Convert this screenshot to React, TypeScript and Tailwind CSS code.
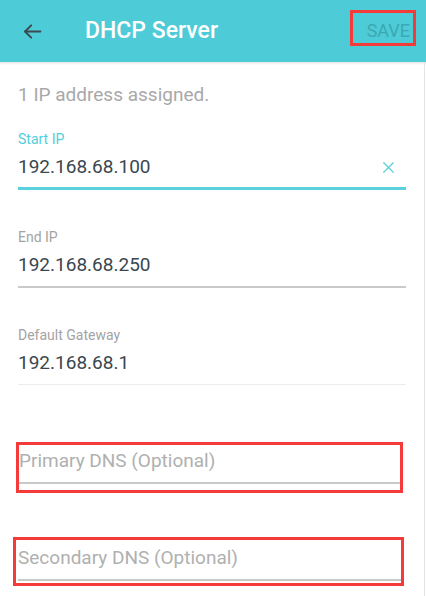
import { X } from 'lucide-react';

const font = { fontFamily: 'Roboto, "Noto Sans", sans-serif' };

function Field({ label, value, active, last }: { label: string; value: string; active?: boolean; last?: boolean }) {
  return (
    <div>
      <div className={`text-[14px] leading-[20px] ${active ? 'text-[#4fcfdc]' : 'text-[#a3a3a3]'}`}>{label}</div>
      <div className="flex items-center justify-between h-[36px]">
        <span className="text-[19px] text-[#3a474e]">{value}</span>
        {active && <X className="w-[19px] h-[19px] mr-[8px] text-[#5ad1dc]" strokeWidth={1.6} />}
      </div>
      <div className={active ? 'h-[3px] bg-[#5ad1dc] mt-[2px]' : last ? 'h-px bg-[#ececec] mt-[3px]' : 'h-[2px] bg-[#c9c9c9] mt-[3px]'} />
    </div>
  );
}

export default function App() {
  return (
    <div className="w-[426px] h-[596px] bg-white overflow-hidden relative" style={font}>
      {/* Toolbar */}
      <div className="h-[62px] bg-[#4dcbd7] flex items-center relative">
        <svg className="ml-[22px] w-[21px] h-[21px]" viewBox="0 0 24 24" fill="none" stroke="#3a4a50" strokeWidth={2.2} strokeLinecap="round" strokeLinejoin="round">
          <path d="M21 12H3.5" />
          <path d="M10.5 5L3.5 12l7 7" />
        </svg>
        <h1 className="ml-[42px] text-[23px] font-medium text-white">DHCP Server</h1>
        <div className="ml-auto mr-[10px] mt-[-6px] border-[3px] border-[#f53a3a] w-[66px] h-[36px] flex items-center justify-end pr-[3px]">
          <span className="text-[18px] text-[#3da8b2] mt-[4px]">SAVE</span>
        </div>
      </div>
      <div className="h-[3px] bg-gradient-to-b from-[#e6e6e6] to-white" />
      <div className="absolute top-[62px] right-[1px] bottom-0 w-px bg-[#e4e4e4]" />

      <div className="pl-[18px] pr-[20px]">
        <div className="mt-[17px] text-[19px] leading-[26px] text-[#a8a8a8]">1 IP address assigned.</div>
        <div className="mt-[21px] flex flex-col gap-[37px]">
          <Field label="Start IP" value="192.168.68.100" active />
          <Field label="End IP" value="192.168.68.250" />
          <Field label="Default Gateway" value="192.168.68.1" last />
        </div>
      </div>

      <div className="mt-[57px] pl-[16px] pr-[23px]">
        <div className="border-[3px] border-[#f53a3a] pb-[6px]">
          <div className="text-[19px] leading-[32px] text-[#b0b0b0]">Primary DNS (Optional)</div>
          <div className="h-[2px] bg-[#c9c9c9] mt-[5px]" />
        </div>
      </div>
      <div className="mt-[44px] pl-[13px] pr-[22px]">
        <div className="border-[3px] border-[#f53a3a] pl-[2px] pb-[2px]">
          <div className="text-[19px] leading-[36px] text-[#b0b0b0]">Secondary DNS (Optional)</div>
          <div className="h-[2px] bg-[#c9c9c9] mt-[3px]" />
        </div>
      </div>
    </div>
  );
}
